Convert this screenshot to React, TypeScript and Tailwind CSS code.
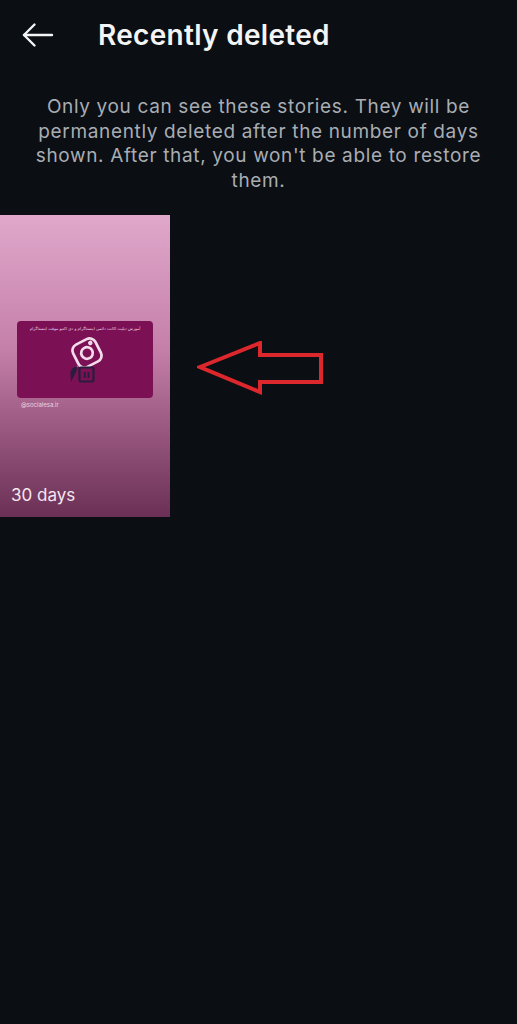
import React from 'react';

function BackArrow() {
  return (
    <svg width="32" height="26" viewBox="0 0 32 26" fill="none" stroke="#f3f4f5" strokeWidth="2.4" strokeLinecap="round" strokeLinejoin="round">
      <path d="M2 13H30" />
      <path d="M12.5 2.5L2 13L12.5 23.5" />
    </svg>
  );
}

function InstagramMark() {
  return (
    <svg width="46" height="66" viewBox="0 0 46 66" fill="none">
      <g transform="rotate(-27 25 21)" stroke="#f3dcea" strokeWidth="2.7">
        <rect x="12.5" y="8.5" width="25" height="25" rx="6.5" />
        <circle cx="25" cy="21" r="5.8" />
        <circle cx="32.5" cy="13.5" r="0.9" fill="#f3dcea" />
      </g>
      <path d="M16 33.5L14 36" stroke="#7fb6c9" strokeWidth="1" />
      <rect x="17.5" y="35.5" width="14" height="14" rx="1" stroke="#2a1c3c" strokeWidth="2.2" fill="#7c1055" />
      <path d="M22.8 40V46M26.5 40V46" stroke="#2a1c3c" strokeWidth="1.8" />
      <path d="M15 34.5C11 35 8 38 8.5 42L9 50L13.5 41C14.5 39 15 37 15 34.5Z" fill="#2a1c3c" />
    </svg>
  );
}

function StoryThumb() {
  return (
    <div className="relative h-[302px] w-[170px] shrink-0 bg-gradient-to-b from-[#e0a8cb] via-[#c47fa9] via-45% to-[#6b2f55]">
      <div className="px-[17px] pt-[106px]">
        <div className="flex h-[77px] flex-col items-center rounded-[4px] bg-[#7c1055] pt-[5px]">
          <p dir="rtl" className="whitespace-nowrap text-[4px] leading-[6px] text-[#f2d9e8]" style={{ fontFamily: '"DejaVu Sans", sans-serif' }}>
            آموزش دیلیت اکانت دائمی اینستاگرام و دی اکتیو موقت اینستاگرام
          </p>
          <InstagramMark />
        </div>
        <p className="mt-[3px] pl-[4px] text-[6px] leading-[8px] text-[#e8d3e2]">@socialesa.ir</p>
      </div>
      <span className="absolute bottom-[12px] left-[11px] text-[17px] leading-[20px] text-[#f5e6ef]">30 days</span>
    </div>
  );
}

export default function App() {
  return (
    <div className="min-h-[1024px] w-[517px] overflow-hidden bg-[#0b0e13] font-['Inter',sans-serif]">
      <header className="flex h-[70px] items-center pl-[22px]">
        <BackArrow />
        <h1 className="ml-[44px] text-[28px] font-semibold leading-[32px] tracking-[0.3px] text-[#f3f4f5]">Recently deleted</h1>
      </header>
      <p className="mx-auto mt-[25px] w-[460px] text-center text-[19px] leading-[24.5px] tracking-[0.65px] text-[#a8adb3]">
        Only you can see these stories. They will be permanently deleted after the number of days shown. After that, you won't be able to restore them.
      </p>
      <div className="mt-[22px] flex items-center">
        <StoryThumb />
        <svg className="ml-[27px] mt-[4px]" width="126" height="54" viewBox="0 0 126 54" fill="none">
          <path d="M3 26L63 2V14H124V41H63V51Z" stroke="#dc272d" strokeWidth="4" strokeLinejoin="miter" />
        </svg>
      </div>
    </div>
  );
}
